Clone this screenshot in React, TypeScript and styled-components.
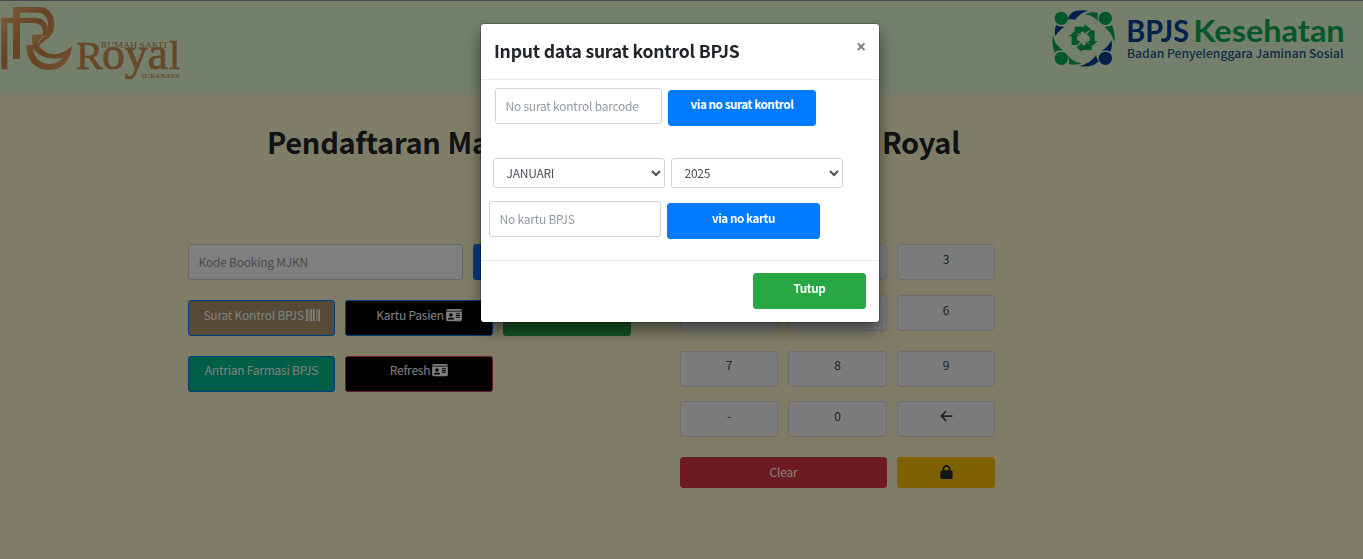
import React from "react";
import styled, { createGlobalStyle } from "styled-components";
import { FaArrowLeft, FaBarcode, FaIdCard, FaLock } from "react-icons/fa6";

const GlobalStyle = createGlobalStyle`
  *, *::before, *::after { box-sizing: border-box; }
  body {
    margin: 0;
    overflow: hidden;
    background: #fffbd0;
    color: #212529;
    font-family: "Noto Sans CJK JP", "Noto Sans", sans-serif;
    font-size: 12px;
    line-height: 21px;
    letter-spacing: -0.23px;
  }
  button, input, select { font: inherit; letter-spacing: inherit; }
`;

const Page = styled.div`
  height: 559px;
  background: #fffbd0;
`;

const Header = styled.header`
  display: flex;
  justify-content: space-between;
  height: 95px;
  background: #e8ffd8;
  border-top: 1px solid #92929c;
  letter-spacing: 0;
`;

const Logo = styled.svg`
  display: block;
  height: 95px;
  margin-top: -1px;
`;

const Heading = styled.h1`
  margin: 26px 0 0 267px;
  width: 693px;
  font-size: 29px;
  font-weight: 700;
  line-height: 40px;
  letter-spacing: -0.3px;
  text-align: justify;
  text-align-last: justify;
  white-space: nowrap;
`;

const Columns = styled.main`
  display: flex;
  gap: 49px;
  margin: 83px 0 0 188px;
`;

const Actions = styled.section`
  display: flex;
  flex-direction: column;
  gap: 20px;
  width: 443px;
`;

const Row = styled.div`
  display: flex;
  gap: 10px;
`;

const Field = styled.input<{ $w: number }>`
  width: ${(p) => p.$w}px;
  height: 36px;
  padding: 5px 10px 7px 9.5px;
  border: 1px solid #ced4da;
  border-radius: 3px;
  background: #fff;
  color: #495057;
  outline: none;
  &::placeholder { color: #939ba2; opacity: 1; }
`;

const Button = styled.button<{ $w: number; $bg: string; $border?: string; $bold?: boolean; $raised?: boolean }>`
  display: flex;
  align-items: flex-start;
  justify-content: center;
  gap: 2px;
  width: ${(p) => p.$w}px;
  height: 36px;
  padding: ${(p) => (p.$raised ? 2 : 3)}px 4px;
  border: 1px solid ${(p) => p.$border ?? p.$bg};
  border-radius: 3px;
  background: ${(p) => p.$bg};
  color: #fff;
  font-size: ${(p) => (p.$bold ? 11.7 : 12)}px;
  font-weight: ${(p) => (p.$bold ? 700 : 400)};
  letter-spacing: ${(p) => (p.$bold ? -0.45 : -0.23)}px;
  white-space: nowrap;
`;

const Glyph = styled.span<{ $w: number }>`
  display: block;
  height: 14px;
  margin-top: 4px;
  svg { display: block; width: ${(p) => p.$w}px; height: 14px; }
`;

const Keypad = styled.section`
  display: grid;
  grid-template-columns: 98px 99px 98px;
  grid-template-rows: 51px 56px 50px 56px 31px;
  column-gap: 10px;
`;

const Key = styled.button<{ $tone?: "danger" | "warning"; $span?: number; $raised?: boolean }>`
  display: flex;
  justify-content: center;
  align-items: flex-start;
  grid-column: span ${(p) => p.$span ?? 1};
  height: ${(p) => (p.$tone ? 31 : 36)}px;
  padding: ${(p) => (p.$raised ? 2 : 3)}px 8px;
  border: 1px solid ${(p) => (p.$tone === "danger" ? "#dc3545" : p.$tone === "warning" ? "#ffc107" : "#dddddf")};
  border-radius: 3px;
  background: ${(p) => (p.$tone === "danger" ? "#dc3545" : p.$tone === "warning" ? "#ffc107" : "#f8f9fa")};
  color: ${(p) => (p.$tone === "danger" ? "#fff" : p.$tone ? "#1f2d3d" : "#444")};
`;

const Backdrop = styled.div`
  position: fixed;
  inset: 0;
  background: rgba(0, 0, 0, 0.5);
`;

const Dialog = styled.div`
  position: absolute;
  left: 481px;
  top: 24px;
  display: flex;
  flex-direction: column;
  width: 398px;
  height: 298px;
  border-radius: 3px;
  background: #fff;
  box-shadow: 0 0 0 1px rgba(0, 0, 0, 0.2), 0 8px 16px rgba(0, 0, 0, 0.5);
`;

const DialogHeader = styled.div`
  display: flex;
  justify-content: space-between;
  height: 56px;
  padding: 13px 13px 0;
  border-bottom: 1px solid #e9ecef;
`;

const DialogTitle = styled.h4`
  margin: 0;
  font-size: 17.6px;
  font-weight: 700;
  line-height: 28px;
  letter-spacing: -0.22px;
`;

const Close = styled.button`
  height: 18px;
  padding: 0;
  border: 0;
  background: none;
  color: #7f7f7f;
  font-family: "Noto Sans", sans-serif;
  font-size: 18px;
  font-weight: 700;
  line-height: 18px;
`;

const DialogBody = styled.div`
  height: 180px;
`;

const DialogRow = styled.div<{ $top: number; $left: number }>`
  display: flex;
  gap: 6px;
  padding: ${(p) => p.$top}px 0 0 ${(p) => p.$left}px;
  ${Button} { margin-top: 2px; }
`;

const Select = styled.select`
  width: 172px;
  height: 30px;
  padding: 0 0 1px 8.5px;
  border: 1px solid #ced4da;
  border-radius: 3px;
  background: #fff;
  color: #495057;
  outline: none;
`;

const DialogFooter = styled.div`
  display: flex;
  justify-content: flex-end;
  padding: 12px 13px;
  border-top: 1px solid #e9ecef;
`;

function RoyalLogo() {
  return (
    <Logo viewBox="0 0 600 285" width="200">
      <defs>
        <linearGradient id="copper" x1="0" y1="0" x2="1" y2="1">
          <stop offset="0" stopColor="#f0b070" />
          <stop offset="0.45" stopColor="#c8874a" />
          <stop offset="1" stopColor="#eba765" />
        </linearGradient>
      </defs>
      <g fill="url(#copper)">
        <path d="M4 53H108C134 54 150 78 142 101L128 110C133 88 124 70 104 69H22V208H4Z" />
        <path d="M39 21H118C148 22 163 46 163 73C163 103 148 112 136 121C128 128 121 132 116 140Q112 127 126 115C139 105 144 92 144 74C144 54 135 39 113 38H60V177H39Z" />
        <path d="M79 135H98Q95 122 97 105Q112 105 130 101Q124 116 114 126Q113 134 120 142Q137 163 165 163Q195 158 217 137C211 178 190 210 148 210C108 211 79 183 79 135ZM98 145Q106 191 148 192Q177 190 188 173Q130 186 98 145Z" fillRule="evenodd" />
      </g>
      <g fill="#d0904f" stroke="#d0904f" strokeWidth="2" fontFamily="Liberation Serif, serif">
        <text y="208" fontSize="122">
          <tspan x="228">R</tspan>
          <tspan x="306" fontSize="137">oya</tspan>
          <tspan x="507">l</tspan>
        </text>
      </g>
      <g fill="#c98a50" fontFamily="Liberation Serif, serif">
        <text x="302" y="143" fontSize="25" textLength="203" lengthAdjust="spacingAndGlyphs">RUMAH SAKIT</text>
        <text x="422" y="234" fontSize="17" textLength="118" lengthAdjust="spacingAndGlyphs">SURABAYA</text>
      </g>
    </Logo>
  );
}

function BpjsLogo() {
  return (
    <Logo viewBox="0 0 969 285" width="323">
      <g fill="#0aac56">
        <circle cx="64" cy="55" r="20" />
        <circle cx="196" cy="55" r="20" />
        <circle cx="64" cy="175" r="20" />
        <path d="M134 43Q154 33 174 39Q169 62 181 71Q164 47 134 43Z" />
        <path d="M194 80Q211 80 216 75Q226 98 223 127Q217 101 194 80Z" />
        <path d="M39 106Q43 133 69 151Q49 150 44 159Q34 136 39 106Z" />
        <path d="M77 158Q95 187 125 190Q105 197 86 192Q91 177 77 158Z" />
        <path d="M104 80H133V73L153 87L133 102V95H122V105L113 99L104 105Z" />
        <path d="M164 91V123H173L157 138L140 123H149V110L139 103L149 95V91Z" />
        <path d="M155 150H126V156L109 142L126 128V135H137V125L147 132L155 125Z" />
        <path d="M95 135V109H87L103 94L119 109H111V119L121 126L111 135Z" />
      </g>
      <g fill="#06409a">
        <circle cx="196" cy="175" r="20" />
        <path d="M84 59Q88 26 145 32Q118 39 105 60Q94 55 84 59Z" />
        <path d="M46 108Q42 87 49 75Q57 81 75 80Q57 90 46 108Z" />
        <path d="M214 121Q219 140 211 155Q198 149 184 153Q206 140 214 121Z" />
        <path d="M118 198Q150 192 168 166Q170 176 176 184Q158 205 118 198Z" />
      </g>
      <g fontFamily="Lato, sans-serif" fontWeight="700" fontSize="90">
        <text x="259" y="127" fill="#06409a" textLength="188" lengthAdjust="spacingAndGlyphs">BPJS</text>
        <text x="460" y="127" fill="#0aac56" textLength="454" lengthAdjust="spacingAndGlyphs">Kesehatan</text>
      </g>
      <text x="261" y="173" fill="#285494" fontFamily="Noto Sans CJK JP, sans-serif" fontWeight="500" fontSize="34" textLength="650" lengthAdjust="spacingAndGlyphs">Badan Penyelenggara Jaminan Sosial</text>
    </Logo>
  );
}

export default function App() {
  return (
    <>
      <GlobalStyle />
      <Page>
        <Header>
          <RoyalLogo />
          <BpjsLogo />
        </Header>
        <Heading>Pendaftaran Mandiri Pasien di Rumah Sakit Royal</Heading>
        <Columns>
          <Actions>
            <Row>
              <Field $w={275} placeholder="Kode Booking MJKN" />
              <Button $w={158} $bg="#007bff">Cari</Button>
            </Row>
            <Row>
              <Button $w={147} $bg="#aa966d" $border="#007bff">Surat Kontrol BPJS<Glyph $w={14}><FaBarcode /></Glyph></Button>
              <Button $w={148} $bg="#000" $border="#007bff">Kartu Pasien<Glyph $w={16}><FaIdCard /></Glyph></Button>
              <Button $w={128} $bg="#28a745">Pasien Baru</Button>
            </Row>
            <Row>
              <Button $w={147} $bg="#00bc8c" $border="#007bff" $raised>Antrian Farmasi BPJS</Button>
              <Button $w={148} $bg="#000" $border="#dc3545" $raised>Refresh<Glyph $w={16}><FaIdCard /></Glyph></Button>
            </Row>
          </Actions>
          <Keypad>
            {["1", "2", "3", "4", "5", "6", "7", "8", "9", "-", "0"].map((k) => (
              <Key key={k} $raised={"789".includes(k)}>{k}</Key>
            ))}
            <Key><Glyph $w={13}><FaArrowLeft /></Glyph></Key>
            <Key $tone="danger" $span={2}>Clear</Key>
            <Key $tone="warning"><Glyph $w={13}><FaLock /></Glyph></Key>
          </Keypad>
        </Columns>
      </Page>
      <Backdrop>
        <Dialog role="dialog">
          <DialogHeader>
            <DialogTitle>Input data surat kontrol BPJS</DialogTitle>
            <Close aria-label="Tutup">×</Close>
          </DialogHeader>
          <DialogBody>
            <DialogRow $top={8} $left={14}>
              <Field $w={167} placeholder="No surat kontrol barcode" />
              <Button $w={148} $bg="#007bff" $bold $raised>via no surat kontrol</Button>
            </DialogRow>
            <DialogRow $top={32} $left={12}>
              <Select defaultValue="JANUARI"><option>JANUARI</option></Select>
              <Select defaultValue="2025"><option>2025</option></Select>
            </DialogRow>
            <DialogRow $top={13} $left={8}>
              <Field $w={172} placeholder="No kartu BPJS" />
              <Button $w={153} $bg="#007bff" $bold>via no kartu</Button>
            </DialogRow>
          </DialogBody>
          <DialogFooter>
            <Button $w={113} $bg="#28a745" $bold>Tutup</Button>
          </DialogFooter>
        </Dialog>
      </Backdrop>
    </>
  );
}
